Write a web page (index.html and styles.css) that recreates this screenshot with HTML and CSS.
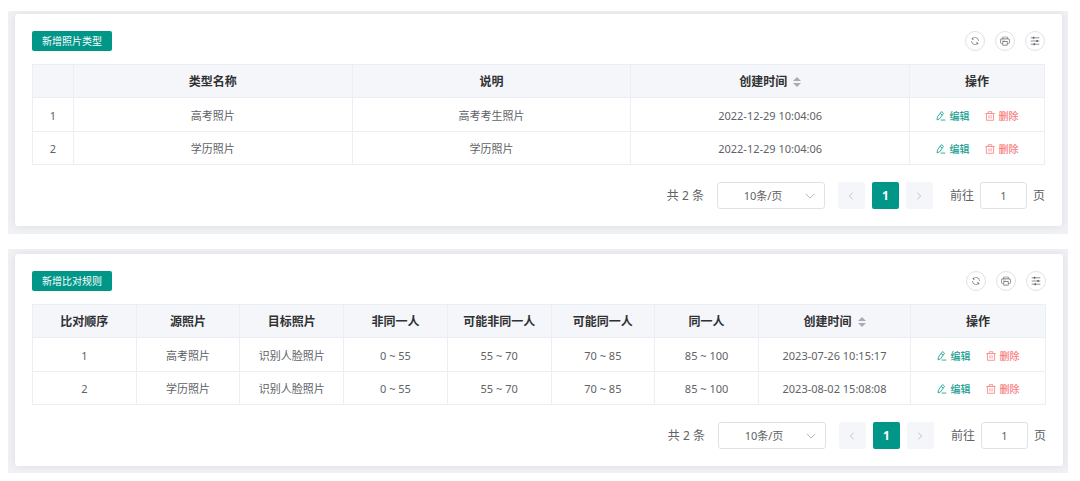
FILE: index.html
```html
<!DOCTYPE html>
<html lang="zh-CN">
<head>
<meta charset="utf-8">
<meta name="viewport" content="width=device-width, initial-scale=1">
<title>照片类型与比对规则</title>
<link rel="stylesheet" href="styles.css">
</head>
<body>
<svg class="sprite" aria-hidden="true">
  <symbol id="i-refresh" viewBox="0 0 1024 1024"><path d="M771.776 794.88A384 384 0 0 1 128 512h64a320 320 0 0 0 555.712 216.448H654.72a32 32 0 1 1 0-64h149.056a32 32 0 0 1 32 32v148.928a32 32 0 1 1-64 0v-50.56zM276.288 295.616h92.992a32 32 0 0 1 0 64H220.16a32 32 0 0 1-32-32V178.56a32 32 0 0 1 64 0v50.56A384 384 0 0 1 896.128 512h-64a320 320 0 0 0-555.776-216.384z"/></symbol>
  <symbol id="i-print" viewBox="0 0 1024 1024"><path d="M256 768H105c-42 0-73-31-73-73V401c0-84 61-145 145-145h79V64h512v192h79c84 0 145 61 145 145v294c0 42-31 73-73 73H768v192H256V768zm64-192v320h384V576H320zm-64 128V512h512v192h128c21 0 32-11 32-32V416c0-60-36-96-96-96H192c-60 0-96 36-96 96v256c0 21 11 32 32 32h128zm64-448h384V128H320v128zm-64 128h64v64h-64v-64zm128 0h64v64h-64v-64z"/></symbol>
  <symbol id="i-filter" viewBox="0 0 14 14"><path d="M1 2.500h12M1 7h12M1 11.500h12" fill="none" stroke="currentColor"/><path d="M4 1h2v3h-2zM9 5.500h2v3h-2zM5 10h2v3h-2z"/></symbol>
  <symbol id="i-edit" viewBox="0 0 14 14"><path d="M2 8.500L7 1.500q.7-.8 1.500-.2l1.500 1.200q.8.700 0 1.500L5 11 1.500 12.500zM5.800 3.500l3 2.200M6.500 12.700H13" fill="none" stroke="currentColor" stroke-width="1.200" stroke-linejoin="round"/></symbol>
  <symbol id="i-delete" viewBox="0 0 14 14"><path d="M.5 3.500h13M4.500 3.500V1h5v2.500M2 3.500V13h10V3.500M5.500 6v4.500M8.500 6v4.500" fill="none" stroke="currentColor" stroke-width="1.100" stroke-linejoin="round"/></symbol>
  <symbol id="i-down" viewBox="0 0 12 12"><path d="M1 3.500l5 5 5-5" fill="none" stroke="currentColor"/></symbol>
  <symbol id="i-left" viewBox="0 0 12 12"><path d="M8.500 1L3.500 6l5 5" fill="none" stroke="currentColor" stroke-width="1.200"/></symbol>
  <symbol id="i-right" viewBox="0 0 12 12"><path d="M3.500 1l5 5-5 5" fill="none" stroke="currentColor" stroke-width="1.200"/></symbol>
  <symbol id="i-sort" viewBox="0 0 8 10"><path d="M0 4l4-4 4 4zM0 6l4 4 4-4z"/></symbol>
</svg>
<main class="page">
  <section class="panel">
    <div class="card">
      <div class="toolbar">
        <button class="btn-primary" type="button">新增照片类型</button>
        <div class="tools">
          <button class="tool" type="button" aria-label="刷新"><svg><use href="#i-refresh"/></svg></button>
          <button class="tool" type="button" aria-label="打印"><svg><use href="#i-print"/></svg></button>
          <button class="tool" type="button" aria-label="列设置"><svg><use href="#i-filter"/></svg></button>
        </div>
      </div>
      <table class="grid">
        <colgroup><col class="col-index"><col><col><col><col class="col-actions"></colgroup>
        <thead><tr><th></th><th>类型名称</th><th>说明</th><th><span class="sortable">创建时间<svg><use href="#i-sort"/></svg></span></th><th>操作</th></tr></thead>
        <tbody>
          <tr><td>1</td><td>高考照片</td><td>高考考生照片</td><td>2022-12-29 10:04:06</td>
            <td><div class="actions"><button class="link edit" type="button"><svg><use href="#i-edit"/></svg>编辑</button><button class="link delete" type="button"><svg><use href="#i-delete"/></svg>删除</button></div></td></tr>
          <tr><td>2</td><td>学历照片</td><td>学历照片</td><td>2022-12-29 10:04:06</td>
            <td><div class="actions"><button class="link edit" type="button"><svg><use href="#i-edit"/></svg>编辑</button><button class="link delete" type="button"><svg><use href="#i-delete"/></svg>删除</button></div></td></tr>
        </tbody>
      </table>
      <div class="pager">
        <span>共 2 条</span>
        <span class="size"><select aria-label="每页条数"><option>10条/页</option></select><svg><use href="#i-down"/></svg></span>
        <div class="pages">
          <button type="button" aria-label="上一页" disabled><svg><use href="#i-left"/></svg></button>
          <button class="current" type="button">1</button>
          <button type="button" aria-label="下一页" disabled><svg><use href="#i-right"/></svg></button>
        </div>
        <div class="jump"><label for="jump-type">前往</label><input id="jump-type" type="text" value="1"><span>页</span></div>
      </div>
    </div>
  </section>
  <section class="panel panel-rules">
    <div class="card">
      <div class="toolbar">
        <button class="btn-primary" type="button">新增比对规则</button>
        <div class="tools">
          <button class="tool" type="button" aria-label="刷新"><svg><use href="#i-refresh"/></svg></button>
          <button class="tool" type="button" aria-label="打印"><svg><use href="#i-print"/></svg></button>
          <button class="tool" type="button" aria-label="列设置"><svg><use href="#i-filter"/></svg></button>
        </div>
      </div>
      <table class="grid">
        <colgroup><col><col><col><col><col><col><col><col class="col-time"><col class="col-actions"></colgroup>
        <thead><tr><th>比对顺序</th><th>源照片</th><th>目标照片</th><th>非同一人</th><th>可能非同一人</th><th>可能同一人</th><th>同一人</th><th><span class="sortable">创建时间<svg><use href="#i-sort"/></svg></span></th><th>操作</th></tr></thead>
        <tbody>
          <tr><td>1</td><td>高考照片</td><td>识别人脸照片</td><td>0 ~ 55</td><td>55 ~ 70</td><td>70 ~ 85</td><td>85 ~ 100</td><td>2023-07-26 10:15:17</td>
            <td><div class="actions"><button class="link edit" type="button"><svg><use href="#i-edit"/></svg>编辑</button><button class="link delete" type="button"><svg><use href="#i-delete"/></svg>删除</button></div></td></tr>
          <tr><td>2</td><td>学历照片</td><td>识别人脸照片</td><td>0 ~ 55</td><td>55 ~ 70</td><td>70 ~ 85</td><td>85 ~ 100</td><td>2023-08-02 15:08:08</td>
            <td><div class="actions"><button class="link edit" type="button"><svg><use href="#i-edit"/></svg>编辑</button><button class="link delete" type="button"><svg><use href="#i-delete"/></svg>删除</button></div></td></tr>
        </tbody>
      </table>
      <div class="pager">
        <span>共 2 条</span>
        <span class="size"><select aria-label="每页条数"><option>10条/页</option></select><svg><use href="#i-down"/></svg></span>
        <div class="pages">
          <button type="button" aria-label="上一页" disabled><svg><use href="#i-left"/></svg></button>
          <button class="current" type="button">1</button>
          <button type="button" aria-label="下一页" disabled><svg><use href="#i-right"/></svg></button>
        </div>
        <div class="jump"><label for="jump-rule">前往</label><input id="jump-rule" type="text" value="1"><span>页</span></div>
      </div>
    </div>
  </section>
</main>
</body>
</html>
```
FILE: styles.css
```css
* { box-sizing: border-box; }
body {
  margin: 0;
  background: #fff;
  color: #606266;
  font: 11px/16px "Noto Sans", "Noto Sans CJK SC", sans-serif;
}
button, input, select { margin: 0; font: inherit; color: inherit; }
button { padding: 0; border: 0; background: none; cursor: pointer; }
svg { display: block; fill: currentColor; }
.sprite { display: none; }

.page { display: flex; flex-direction: column; gap: 15px; padding: 11px 12px 8px 8px; }
.panel { padding: 3px 6px 8px 7px; background: #f0f1f5; overflow: hidden; }
.panel-rules { padding: 5px 5px 7px 7px; }
.card {
  padding: 17px;
  border-radius: 3px;
  background: #fff;
  box-shadow: 0 0 10px rgba(0, 0, 30, 0.08);
}

.toolbar { display: flex; justify-content: space-between; align-items: center; margin-bottom: 13px; }
.btn-primary {
  height: 20px;
  padding: 0 10px;
  border-radius: 2px;
  background: #009688;
  color: #fff;
  font-size: 10px;
}
.tools { display: flex; gap: 10px; }
.tool {
  display: grid;
  place-items: center;
  width: 20px;
  height: 20px;
  border: 1px solid #e0e2ea;
  border-radius: 50%;
}
.tool svg { width: 10px; height: 10px; }

.grid { width: 100%; border-collapse: collapse; table-layout: fixed; }
.grid th, .grid td { height: 33px; padding: 2px 0 0; border: 1px solid #ebeef5; text-align: center; }
.grid tbody tr:first-child td { height: 34px; }
.grid th { background: #f5f6fa; color: #303133; font-size: 12px; font-weight: 700; }
.col-index { width: 41px; }
.col-time { width: 152px; }
.col-actions { width: 135px; }
.sortable { display: inline-flex; align-items: center; gap: 6px; }
.sortable svg { width: 8px; height: 10px; color: #a8abb2; }
.actions { display: flex; justify-content: center; gap: 15px; }
.link { display: flex; align-items: center; gap: 4px; font-size: 10px; font-weight: 500; }
.link svg { width: 10px; height: 10px; }
.edit { color: #1a9f92; }
.delete { color: #f77c7c; }

.pager { display: flex; justify-content: flex-end; align-items: center; gap: 13px; margin-top: 17px; font-size: 12px; }
.size { display: grid; align-items: center; width: 108px; }
.size > * { grid-area: 1 / 1; }
.size select {
  appearance: none;
  width: 100%;
  height: 27px;
  padding: 0 20px 0 4px;
  border: 1px solid #e0e2ea;
  border-radius: 3px;
  background: #fff;
  font-size: 11px;
  text-align: center;
  text-align-last: center;
}
.size svg { justify-self: end; width: 10px; height: 10px; margin-right: 10px; color: #a8abb2; pointer-events: none; }
.pages { display: flex; gap: 7px; }
.pages button {
  display: grid;
  place-items: center;
  width: 27px;
  height: 27px;
  border-radius: 2px;
  background: #f5f6fa;
  color: #b4b6bd;
}
.pages svg { width: 8px; height: 8px; }
.pages .current { background: #009688; color: #fff; font-weight: 700; }
.jump { display: flex; align-items: center; gap: 6px; margin-left: 4px; }
.jump input {
  width: 47px;
  height: 27px;
  padding: 0;
  border: 1px solid #e0e2ea;
  border-radius: 3px;
  background: #fff;
  font-size: 11px;
  text-align: center;
}
```
